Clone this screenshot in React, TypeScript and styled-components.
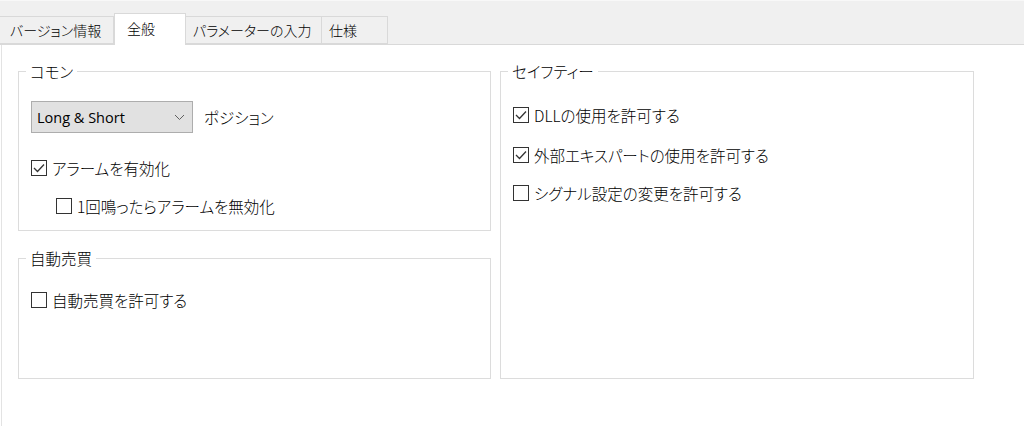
import React from "react";
import styled, { createGlobalStyle } from "styled-components";

const GlobalStyle = createGlobalStyle`
  html, body {
    margin: 0;
    padding: 0;
    background: #ffffff;
  }
  body {
    font-family: "Noto Sans CJK JP", "Noto Sans", sans-serif;
    font-weight: 300;
    font-feature-settings: "palt";
    color: #000000;
    width: 1024px;
    height: 426px;
    overflow: hidden;
  }
`;

const Window = styled.div`
  display: flex;
  flex-direction: column;
  width: 1024px;
  height: 426px;
`;

const TabStrip = styled.div`
  display: flex;
  align-items: flex-end;
  box-sizing: border-box;
  height: 45px;
  background: #f0f0f0;
  border-top: 1px solid #f8f8f8;
  border-bottom: 1px solid #d9d9d9;
`;

const Tab = styled.div<{ $width: number; $active?: boolean }>`
  display: flex;
  align-items: center;
  box-sizing: border-box;
  width: ${(p) => p.$width}px;
  height: ${(p) => (p.$active ? 32 : 28)}px;
  margin-bottom: ${(p) => (p.$active ? -1 : 0)}px;
  padding: 0 0 ${(p) => (p.$active ? 3 : 0)}px ${(p) => (p.$active ? 12 : 7)}px;
  background: ${(p) => (p.$active ? "#ffffff" : "#f0f0f0")};
  border: 1px solid #d9d9d9;
  border-bottom: ${(p) => (p.$active ? "none" : "1px solid #d9d9d9")};
  border-left-width: ${(p) => (p.$active ? 1 : 0)}px;
  font-size: 14px;
  white-space: nowrap;
  &:first-child {
    border-left: none;
    padding-left: 10px;
  }
`;

const Panel = styled.div`
  flex: 1;
  margin-left: 1px;
  border-left: 1px solid #e3e3e3;
  padding: 16px 0 0 16px;
`;

const Columns = styled.div`
  display: grid;
  grid-template-columns: 473px 474px;
  column-gap: 9px;
  height: 318px;
`;

const Stack = styled.div`
  display: flex;
  flex-direction: column;
  gap: 17px;
`;

const Group = styled.fieldset<{ $height?: number }>`
  margin: 0;
  padding: 0 12px;
  box-sizing: border-box;
  min-width: 0;
  height: ${(p) => (p.$height ? `${p.$height}px` : "auto")};
  border: 1px solid #dcdcdc;
`;

const Legend = styled.legend`
  margin-left: -5px;
  padding: 0 4px;
  font-size: 15.5px;
  line-height: 20px;
`;

const Row = styled.div<{ $top: number; $indent?: number }>`
  display: flex;
  align-items: center;
  height: 20px;
  margin-top: ${(p) => p.$top}px;
  margin-left: ${(p) => p.$indent ?? 0}px;
  font-size: 15.5px;
  white-space: nowrap;
`;

const Box = styled.span`
  display: inline-flex;
  align-items: center;
  justify-content: center;
  box-sizing: border-box;
  width: 16px;
  height: 16px;
  margin-right: 5px;
  border: 1px solid #333333;
  background: #ffffff;
  flex-shrink: 0;
`;

const Select = styled.div`
  display: flex;
  align-items: center;
  justify-content: space-between;
  box-sizing: border-box;
  width: 162px;
  height: 32px;
  padding: 0 7px 0 5px;
  background: #e1e1e1;
  border: 1px solid #adadad;
  font-family: "Open Sans", sans-serif;
  font-weight: 400;
  font-feature-settings: normal;
  font-size: 14.5px;
`;

const SelectRow = styled.div`
  display: flex;
  align-items: center;
  gap: 11px;
  margin-top: 20px;
  font-size: 15.5px;
`;

const Check: React.FC<{ checked?: boolean; label: string; top: number; indent?: number }> = ({
  checked,
  label,
  top,
  indent,
}) => (
  <Row $top={top} $indent={indent}>
    <Box>
      {checked && (
        <svg width="12" height="10" viewBox="0 0 12 10">
          <polyline points="1,5 4.5,8.5 11,1.5" fill="none" stroke="#333" strokeWidth="1.3" />
        </svg>
      )}
    </Box>
    {label}
  </Row>
);

const App: React.FC = () => {
  return (
    <>
      <GlobalStyle />
      <Window>
        <TabStrip>
          <Tab $width={114}>バージョン情報</Tab>
          <Tab $width={72} $active>全般</Tab>
          <Tab $width={136}>パラメーターの入力</Tab>
          <Tab $width={66}>仕様</Tab>
        </TabStrip>
        <Panel>
          <Columns>
            <Stack>
              <Group $height={170}>
                <Legend>コモン</Legend>
                <SelectRow>
                  <Select>
                    <span>Long &amp; Short</span>
                    <svg width="11" height="7" viewBox="0 0 11 7">
                      <polyline points="1,1 5.5,5.5 10,1" fill="none" stroke="#606060" strokeWidth="1" />
                    </svg>
                  </Select>
                  ポジション
                </SelectRow>
                <Check checked label="アラームを有効化" top={25} />
                <Check label="1回鳴ったらアラームを無効化" top={18} indent={25} />
              </Group>
              <Group $height={131}>
                <Legend>自動売買</Legend>
                <Check label="自動売買を許可する" top={22} />
              </Group>
            </Stack>
            <Group>
              <Legend>セイフティー</Legend>
              <Check checked label="DLLの使用を許可する" top={24} />
              <Check checked label="外部エキスパートの使用を許可する" top={20} />
              <Check label="シグナル設定の変更を許可する" top={18} />
            </Group>
          </Columns>
        </Panel>
      </Window>
    </>
  );
};

export default App;
